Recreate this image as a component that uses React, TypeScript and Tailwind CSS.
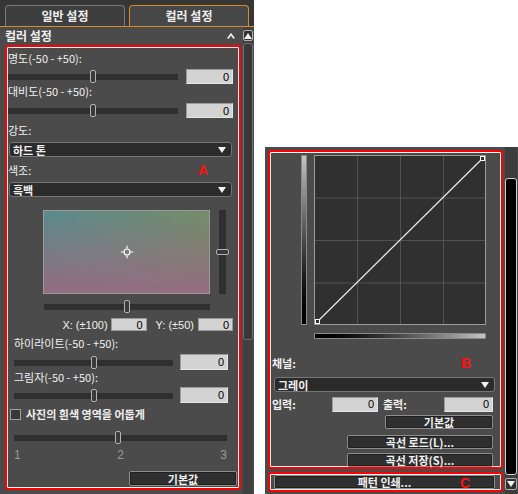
import type { ReactNode } from "react"

function Input({ className = "" }: { className?: string }) {
  return (
    <div
      className={`flex h-[15px] items-center justify-end border border-[#9a9a9a] border-b-[#e6e6e6] border-r-[#e6e6e6] bg-[#d3d3d3] pr-[3px] font-['Liberation_Sans',sans-serif] text-[11px] text-black ${className}`}
    >
      0
    </div>
  )
}

function Slider({ className = "", value }: { className?: string; value: number }) {
  return (
    <div className={`relative flex h-[13px] items-center ${className}`}>
      <div className="h-[6px] w-full bg-[#2f2f2f]" />
      <div
        className="absolute top-0 h-[13px] w-[6px] -translate-x-1/2 rounded-[2px] border border-[#b4b4b4] bg-[#3a3a3a]"
        style={{ left: `${value}%` }}
      />
    </div>
  )
}

function Triangle({ up = false }: { up?: boolean }) {
  return (
    <svg width="8" height="6" viewBox="0 0 8 6" className="shrink-0">
      <path d={up ? "M0 6 L4 0 L8 6 Z" : "M0 0 L8 0 L4 6 Z"} fill="#f2f2f2" />
    </svg>
  )
}

function Select({ label, className = "" }: { label: string; className?: string }) {
  return (
    <div
      className={`flex h-[15px] items-center justify-between rounded-[3px] border border-[#767676] bg-[#2b2b2b] pl-[3px] pr-[5px] font-bold ${className}`}
    >
      <span>{label}</span>
      <Triangle />
    </div>
  )
}

function Button({ children, className = "" }: { children: ReactNode; className?: string }) {
  return (
    <div
      className={`relative flex items-center justify-center rounded-[2px] border border-[#8e8e8e] bg-[#2f2f2f] font-bold shadow-[inset_0_0_0_1px_#1f1f1f] ${className}`}
    >
      {children}
    </div>
  )
}

function Mark({ letter, className = "" }: { letter: string; className?: string }) {
  return (
    <span className={`font-['Liberation_Sans',sans-serif] text-[14px] font-bold leading-[12px] text-[#ff1010] ${className}`}>
      {letter}
    </span>
  )
}

function Crosshair() {
  return (
    <svg width="13" height="13" viewBox="0 0 13 13" className="absolute left-1/2 top-1/2 -translate-x-1/2 -translate-y-1/2">
      <circle cx="6.5" cy="6.5" r="3" fill="none" stroke="#ffffff" strokeWidth="1.2" />
      <path d="M6.5 0 V3 M6.5 10 V13 M0 6.5 H3 M10 6.5 H13" stroke="#ffffff" strokeWidth="1.2" />
    </svg>
  )
}

function LeftPanel() {
  return (
    <div className="flex h-[494px] w-[254px] shrink-0 flex-col bg-[#4b4b4b]">
      <div className="flex h-[27px] items-end gap-[4px] border-b border-[#d98a28] bg-[#363636] px-[5px]">
        <div className="flex h-[21px] w-[121px] items-center justify-center rounded-t-[4px] border border-b-0 border-[#7a7a7a] bg-[#3e3e3e] text-[12px] font-bold">
          일반 설정
        </div>
        <div className="flex h-[21px] w-[121px] items-center justify-center rounded-t-[4px] border border-b-0 border-[#d98a28] bg-[#474747] text-[12px] font-bold">
          컬러 설정
        </div>
      </div>

      <div className="flex flex-1">
        <div className="flex w-[242px] flex-col">
          <div className="flex h-[18px] items-center justify-between pl-[5px] pr-[7px] text-[12px] font-bold">
            <span>컬러 설정</span>
            <svg width="8" height="6" viewBox="0 0 8 6">
              <path d="M0.8 5.5 L4 1.2 L7.2 5.5" fill="none" stroke="#f2f2f2" strokeWidth="1.6" />
            </svg>
          </div>

          <div className="ml-[5px] flex h-[445px] w-[236px] flex-col rounded-[3px] border-2 border-[#ff0000] shadow-[inset_0_0_0_1px_#f4f4f4]">
            <div className="mt-[5px] h-[12px] pl-[1px]">명도(-50 - +50):</div>
            <div className="mt-[5px] flex h-[16px] items-start pl-[1px]">
              <Slider className="mt-[1px] w-[170px]" value={50} />
              <Input className="ml-[8px] w-[47px]" />
            </div>
            <div className="h-[12px] pl-[1px]">대비도(-50 - +50):</div>
            <div className="mt-[6px] flex h-[15px] items-start pl-[1px]">
              <Slider className="mt-[1px] w-[170px]" value={50} />
              <Input className="ml-[8px] w-[47px]" />
            </div>
            <div className="mt-[6px] h-[12px] pl-[1px]">강도:</div>
            <Select label="하드 톤" className="ml-[2px] mt-[6px] w-[223px]" />
            <div className="mt-[7px] flex h-[12px] items-center pl-[1px] pr-[31px]">
              <span>색조:</span>
              <Mark letter="A" className="ml-auto" />
            </div>
            <Select label="흑백" className="ml-[2px] mt-[6px] w-[223px]" />

            <div className="mt-[13px] flex h-[84px] pl-[36px]">
              <div className="relative h-[84px] w-[167px] border border-[#9a9a9a] bg-gradient-to-r from-[#5a8a8e] to-[#748d68]">
                <div className="h-full w-full bg-gradient-to-b from-transparent to-[#946c80]" />
                <Crosshair />
              </div>
              <div className="relative ml-[6px] flex h-[84px] w-[13px] justify-center">
                <div className="h-full w-[7px] bg-[#2f2f2f]" />
                <div className="absolute left-0 top-[39px] h-[6px] w-[13px] rounded-[2px] border border-[#b4b4b4] bg-[#3a3a3a]" />
              </div>
            </div>
            <Slider className="ml-[37px] mt-[6px] w-[166px]" value={50} />
            <div className="mt-[5px] flex h-[13px] items-center justify-end pr-[6px] font-['Liberation_Sans',sans-serif]">
              <span>X: (±100)</span>
              <div className="ml-[3px] flex h-[13px] w-[36px] items-center justify-end border border-[#9a9a9a] bg-[#d3d3d3] pr-[3px] text-black">
                0
              </div>
              <span className="ml-[9px]">Y: (±50)</span>
              <div className="ml-[4px] flex h-[13px] w-[35px] items-center justify-end border border-[#9a9a9a] bg-[#d3d3d3] pr-[3px] text-black">
                0
              </div>
            </div>

            <div className="mt-[6px] h-[12px] pl-[7px]">하이라이트(-50 - +50):</div>
            <div className="mt-[5px] flex h-[16px] items-start pl-[7px]">
              <Slider className="mt-[2px] w-[159px]" value={50} />
              <Input className="ml-[7px] h-[16px] w-[48px]" />
            </div>
            <div className="mt-[1px] h-[12px] pl-[7px]">그림자(-50 - +50):</div>
            <div className="mt-[4px] flex h-[16px] items-start pl-[7px]">
              <Slider className="mt-[2px] w-[159px]" value={50} />
              <Input className="ml-[7px] h-[16px] w-[48px]" />
            </div>

            <div className="mt-[5px] flex h-[12px] items-center pl-[3px]">
              <div className="h-[11px] w-[11px] border border-[#a0a0a0] bg-[#383838]" />
              <span className="ml-[5px] font-bold">사진의 흰색 영역을 어둡게</span>
            </div>
            <Slider className="ml-[7px] mt-[11px] w-[213px]" value={49} />
            <div className="ml-[7px] mt-[5px] flex h-[12px] w-[213px] justify-between font-['Liberation_Sans',sans-serif] text-[12px] text-[#9a9a9a]">
              <span>1</span>
              <span>2</span>
              <span>3</span>
            </div>
            <Button className="ml-[122px] mt-[10px] h-[15px] w-[108px]">기본값</Button>
          </div>
        </div>

        <div className="ml-[1px] flex w-[10px] flex-col bg-[#404040]">
          <div className="mt-[3px] flex h-[11px] items-center justify-center rounded-[2px] border border-[#b0b0b0] bg-[#303030]">
            <Triangle up />
          </div>
          <div className="mt-[2px] h-[297px] rounded-[3px] border border-[#707070] bg-[#383838]" />
        </div>
      </div>
    </div>
  )
}

function CurveGraph() {
  const lines = [43, 86, 129]
  return (
    <svg width="172" height="170" viewBox="0 0 172 170" className="block">
      <rect x="0.5" y="0.5" width="171" height="169" fill="#303030" stroke="#9a9a9a" />
      {lines.map((p) => (
        <g key={p}>
          <line x1={p + 0.5} y1="1" x2={p + 0.5} y2="169" stroke="#525252" />
          <line x1="1" y1={(p * 170) / 172 + 0.5} x2="171" y2={(p * 170) / 172 + 0.5} stroke="#525252" />
        </g>
      ))}
      <line x1="3" y1="167" x2="169" y2="3" stroke="#e6e6e6" strokeWidth="1.3" />
      <rect x="1.5" y="164.5" width="4" height="4" fill="#303030" stroke="#ffffff" />
      <rect x="166.5" y="1.5" width="4" height="4" fill="#303030" stroke="#ffffff" />
    </svg>
  )
}

function RightPanel() {
  return (
    <div className="ml-[11px] mt-[147px] flex h-[347px] w-[253px] bg-[#4b4b4b]">
      <div className="flex w-[240px] flex-col pl-[3px] pt-[3px]">
        <div className="flex h-[319px] w-[235px] flex-col rounded-[3px] border-2 border-[#ff0000] shadow-[inset_0_0_0_1px_#f4f4f4]">
          <div className="mt-[3px] flex h-[170px] pl-[31px]">
            <div className="h-[170px] w-[6px] border border-[#8a8a8a] bg-gradient-to-b from-[#c4c4c4] to-black" />
            <div className="ml-[7px]">
              <CurveGraph />
            </div>
          </div>
          <div className="ml-[44px] mt-[8px] h-[6px] w-[172px] rounded-[1px] border border-[#8a8a8a] bg-gradient-to-r from-black to-[#c4c4c4]" />
          <div className="mt-[18px] flex h-[12px] items-center pl-[2px] pr-[30px]">
            <span className="font-bold">채널:</span>
            <Mark letter="B" className="ml-auto" />
          </div>
          <Select label="그레이" className="ml-[4px] mt-[8px] w-[221px]" />
          <div className="mt-[5px] flex h-[14px] items-center pl-[2px]">
            <span className="w-[60px] font-bold">입력:</span>
            <Input className="h-[14px] w-[46px]" />
            <span className="ml-[5px] w-[61px] font-bold">출력:</span>
            <Input className="h-[14px] w-[49px]" />
          </div>
          <Button className="ml-[115px] mt-[4px] h-[14px] w-[108px]">기본값</Button>
          <Button className="ml-[77px] mt-[6px] h-[14px] w-[146px]">곡선 로드(L)...</Button>
          <Button className="ml-[77px] mt-[4px] h-[14px] w-[146px]">곡선 저장(S)...</Button>
        </div>
        <div className="mt-[3px] flex h-[20px] w-[235px] items-center rounded-[3px] border-2 border-[#ff0000] shadow-[inset_0_0_0_1px_#f4f4f4] pl-[4px]">
          <Button className="h-[14px] w-[221px]">
            패턴 인쇄...
            <Mark letter="C" className="absolute right-[24px] top-[1px]" />
          </Button>
        </div>
      </div>
      <div className="flex w-[12px] flex-col bg-[#3d3d3d]">
        <div className="mt-[31px] h-[297px] rounded-[3px] border border-[#d0d0d0] bg-black" />
        <div className="mt-[3px] flex h-[12px] items-center justify-center rounded-[2px] border border-[#b0b0b0] bg-[#303030]">
          <Triangle />
        </div>
      </div>
    </div>
  )
}

export default function App() {
  return (
    <div className="flex h-[494px] w-[518px] overflow-hidden bg-white font-['Noto_Sans_CJK_KR','Noto_Sans',sans-serif] text-[11px] leading-[12px] text-[#f0f0f0]">
      <LeftPanel />
      <RightPanel />
    </div>
  )
}
